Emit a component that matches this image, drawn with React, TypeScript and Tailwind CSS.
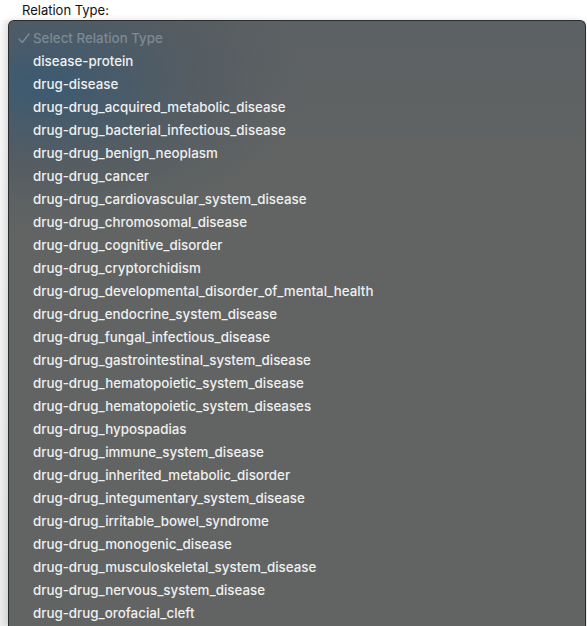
import React from 'react';

const relationTypes = [
  'disease-protein',
  'drug-disease',
  'drug-drug_acquired_metabolic_disease',
  'drug-drug_bacterial_infectious_disease',
  'drug-drug_benign_neoplasm',
  'drug-drug_cancer',
  'drug-drug_cardiovascular_system_disease',
  'drug-drug_chromosomal_disease',
  'drug-drug_cognitive_disorder',
  'drug-drug_cryptorchidism',
  'drug-drug_developmental_disorder_of_mental_health',
  'drug-drug_endocrine_system_disease',
  'drug-drug_fungal_infectious_disease',
  'drug-drug_gastrointestinal_system_disease',
  'drug-drug_hematopoietic_system_disease',
  'drug-drug_hematopoietic_system_diseases',
  'drug-drug_hypospadias',
  'drug-drug_immune_system_disease',
  'drug-drug_inherited_metabolic_disorder',
  'drug-drug_integumentary_system_disease',
  'drug-drug_irritable_bowel_syndrome',
  'drug-drug_monogenic_disease',
  'drug-drug_musculoskeletal_system_disease',
  'drug-drug_nervous_system_disease',
  'drug-drug_orofacial_cleft',
];

export default function App() {
  return (
    <div className="h-[626px] w-[587px] overflow-hidden bg-white font-['Inter',sans-serif] text-[13px]">
      {/* label */}
      <div className="h-[20px] pl-[22px] pt-[2px] leading-[16px] text-[#111]">Relation Type:</div>

      {/* open dropdown menu */}
      <div className="flex h-[606px] bg-gradient-to-b from-[#fafafa] to-[#ececec] pl-[8px] pr-[1px]">
        <div className="relative flex-1 overflow-hidden rounded-t-[6px] border border-b-0 border-[#2a2c2e] bg-[#626463] shadow-[-3px_0_6px_rgba(0,0,0,0.12)]">
          <div className="absolute inset-0 bg-[radial-gradient(ellipse_260px_150px_at_6%_10%,rgba(48,88,120,0.85),rgba(60,80,96,0.35)_55%,transparent_100%)]" />
          <div className="absolute inset-x-0 top-0 h-[140px] bg-gradient-to-b from-[rgba(80,90,100,0.35)] to-transparent" />
          <ul className="relative pt-[6px] text-[13.35px]">
            <li className="flex h-[23px] items-center font-medium text-[#7b8a95]">
              <span className="flex w-[24px] pl-[9px]">
                <svg width="12" height="11" viewBox="0 0 12 11" fill="none" stroke="currentColor" strokeWidth="1.4" strokeLinecap="round" strokeLinejoin="round">
                  <path d="M1 6 L4.2 9.5 L11 1" />
                </svg>
              </span>
              Select Relation Type
            </li>
            {relationTypes.map((type) => (
              <li key={type} className="flex h-[23px] items-center pl-[24px] font-medium text-[#f0f0f0]">
                {type}
              </li>
            ))}
          </ul>
        </div>
      </div>
    </div>
  );
}
